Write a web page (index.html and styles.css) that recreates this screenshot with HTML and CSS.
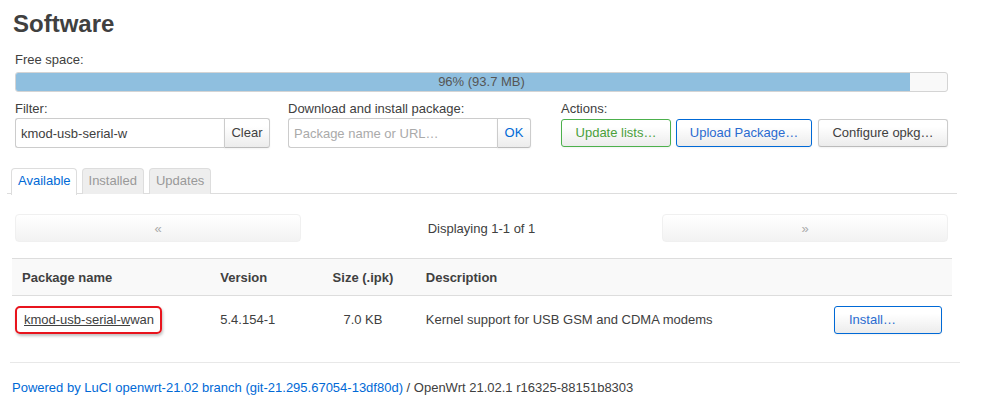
FILE: index.html
```html
<!DOCTYPE html>
<html>
<head>
<meta charset="utf-8">
<title>Software</title>
<link rel="stylesheet" href="styles.css">
</head>
<body>
<div class="page">
  <h2 class="title">Software</h2>

  <div class="label free-label">Free space:</div>
  <div class="progress">
    <div class="progress-fill" style="width:96%"></div>
    <div class="progress-text">96% (93.7 MB)</div>
  </div>

  <div class="controls">
    <div class="control filter">
      <div class="label">Filter:</div>
      <div class="input-group">
        <input class="text-input" type="text" value="kmod-usb-serial-w">
        <button class="btn addon">Clear</button>
      </div>
    </div>
    <div class="control download">
      <div class="label">Download and install package:</div>
      <div class="input-group">
        <input class="text-input" type="text" placeholder="Package name or URL…">
        <button class="btn addon addon-blue">OK</button>
      </div>
    </div>
    <div class="control actions">
      <div class="label">Actions:</div>
      <div class="btn-row">
        <button class="btn btn-green">Update lists…</button>
        <button class="btn btn-blue btn-upload">Upload Package…</button>
        <button class="btn btn-config">Configure opkg…</button>
      </div>
    </div>
  </div>

  <ul class="tabs">
    <li class="tab active">Available</li>
    <li class="tab">Installed</li>
    <li class="tab">Updates</li>
  </ul>

  <div class="pager">
    <button class="pager-btn">«</button>
    <div class="pager-text">Displaying 1-1 of 1</div>
    <button class="pager-btn">»</button>
  </div>

  <table class="pkg-table">
    <thead>
      <tr>
        <th class="col-name">Package name</th>
        <th class="col-version">Version</th>
        <th class="col-size">Size (.ipk)</th>
        <th class="col-desc">Description</th>
        <th class="col-action"></th>
      </tr>
    </thead>
    <tbody>
      <tr>
        <td class="col-name"><span class="highlight-box"><a class="pkg-link" href="#"><span class="match">kmod-usb-serial-w</span>wan</a></span></td>
        <td class="col-version">5.4.154-1</td>
        <td class="col-size">7.0 KB</td>
        <td class="col-desc">Kernel support for USB GSM and CDMA modems</td>
        <td class="col-action"><button class="btn btn-blue install">Install…</button></td>
      </tr>
    </tbody>
  </table>

  <footer class="footer">
    <a class="footer-link" href="#">Powered by LuCI openwrt-21.02 branch (git-21.295.67054-13df80d)</a> / OpenWrt 21.02.1 r16325-88151b8303
  </footer>
</div>
</body>
</html>
```

FILE: styles.css
```css
* { box-sizing: border-box; }

body {
  margin: 0;
  background: #fff;
  color: #404040;
  font-family: "Liberation Sans", Arial, sans-serif;
  font-size: 13px;
}

.page {
  padding: 9px 0 0 15px;
  width: 948px;
}

.title {
  margin: 0 0 0 -2px;
  font-size: 24px;
  line-height: 30px;
  font-weight: bold;
  color: #404040;
}

.label {
  line-height: 16px;
  color: #404040;
  white-space: nowrap;
}

.free-label {
  margin-top: 13px;
}

.progress {
  position: relative;
  margin-top: 4px;
  height: 20px;
  border: 1px solid #d4d4d4;
  border-radius: 3px;
  background: #f9f9f9;
  overflow: hidden;
}

.progress-fill {
  height: 100%;
  background: #8fbfdf;
}

.progress-text {
  position: absolute;
  left: 0;
  right: 0;
  top: 0;
  line-height: 18px;
  text-align: center;
  color: #555;
}

.controls {
  display: flex;
  margin-top: 9px;
}

.control { flex-shrink: 0; }

.control .label {
  margin-bottom: 1px;
}

.filter { width: 273px; }
.download { width: 273px; }
.actions { flex: 1; }

.input-group {
  display: flex;
  height: 30px;
}

.text-input {
  width: 209px;
  height: 30px;
  border: 1px solid #ccc;
  border-right: none;
  border-radius: 3px 0 0 3px;
  padding: 0 5px;
  font-family: inherit;
  font-size: 13px;
  color: #404040;
  outline: none;
}

.text-input::placeholder {
  color: #aaa;
}

.btn {
  height: 28px;
  padding: 0 10px;
  border: 1px solid #ccc;
  border-bottom-color: #bbb;
  border-radius: 3px;
  background: linear-gradient(#fff, #fff 25%, #ececec);
  color: #404040;
  font-family: inherit;
  font-size: 13px;
  line-height: 26px;
  white-space: nowrap;
  cursor: pointer;
  box-shadow: 0 1px 2px rgba(0,0,0,0.05);
}

.addon {
  height: 30px;
  width: 46px;
  padding: 0;
  border-radius: 0 3px 3px 0;
}

.addon-blue { color: #0069d6; width: 34px; }

.btn-row {
  display: flex;
  margin-top: 2px;
}

.btn-row .btn { padding: 0; }

.btn-green {
  width: 110px;
  border-color: #4cb04c;
  color: #4a9f3a;
}

.btn-blue {
  border-color: #0069d6;
  color: #2a6bd0;
}

.btn-row .btn-upload { width: 136px; margin-left: 5px; }
.btn-row .btn-config { width: 130px; margin-left: 6px; }

.tabs {
  display: flex;
  list-style: none;
  margin: 20px 0 0 -8px;
  padding: 0 0 0 4px;
  width: 950px;
  border-bottom: 1px solid #ddd;
  height: 26px;
}

.tab {
  height: 26px;
  margin-right: 5px;
  padding: 0 6px;
  line-height: 24px;
  border: 1px solid #ddd;
  border-bottom: none;
  border-radius: 4px 4px 0 0;
  background: #eee;
  color: #999;
}

.tab.active {
  background: #fff;
  color: #0069d6;
  height: 27px;
  padding: 0 5px 0 6px;
}

.pager {
  display: flex;
  align-items: center;
  margin-top: 20px;
  height: 28px;
}

.pager-btn {
  width: 286px;
  height: 28px;
  border: 1px solid #f0f0f0;
  border-radius: 4px;
  background: linear-gradient(#fff, #f2f2f2);
  color: #aaa;
  font-family: inherit;
  font-size: 13px;
}

.pager-text {
  flex: 1;
  text-align: center;
  color: #404040;
}

.pkg-table {
  margin: 16px 0 0 -3px;
  width: 940px;
  border-collapse: collapse;
}

.pkg-table th {
  height: 37px;
  background: #f9f9f9;
  border-top: 1px solid #ddd;
  border-bottom: 1px solid #ddd;
  font-weight: bold;
  text-align: left;
  padding: 0 10px;
}

.pkg-table td {
  height: 48px;
  padding: 0 10px;
}

.col-name { width: 199px; }
.col-version { width: 100px; }
.col-size { width: 106px; text-align: center !important; }
.col-desc { width: 410px; }
.col-action { text-align: right; }

.highlight-box {
  display: inline-block;
  margin-left: -7px;
  padding: 4px 6px 4px 7px;
  border: 2px solid #e8141d;
  border-radius: 5px;
  box-shadow: 1px 2px 3px rgba(0,0,0,0.25);
  line-height: 16px;
}

.pkg-link {
  color: #404040;
  text-decoration: none;
}

.pkg-link .match {
  text-decoration: underline;
}

.install {
  width: 108px;
  height: 28px;
  text-align: left;
  padding-left: 14px;
}

.footer {
  margin: 18px 0 0 -5px;
  width: 950px;
  border-top: 1px solid #e8e8e8;
  padding-top: 17px;
  padding-left: 2px;
  line-height: 16px;
  color: #404040;
}

.footer-link {
  color: #0069d6;
  text-decoration: none;
}
```
